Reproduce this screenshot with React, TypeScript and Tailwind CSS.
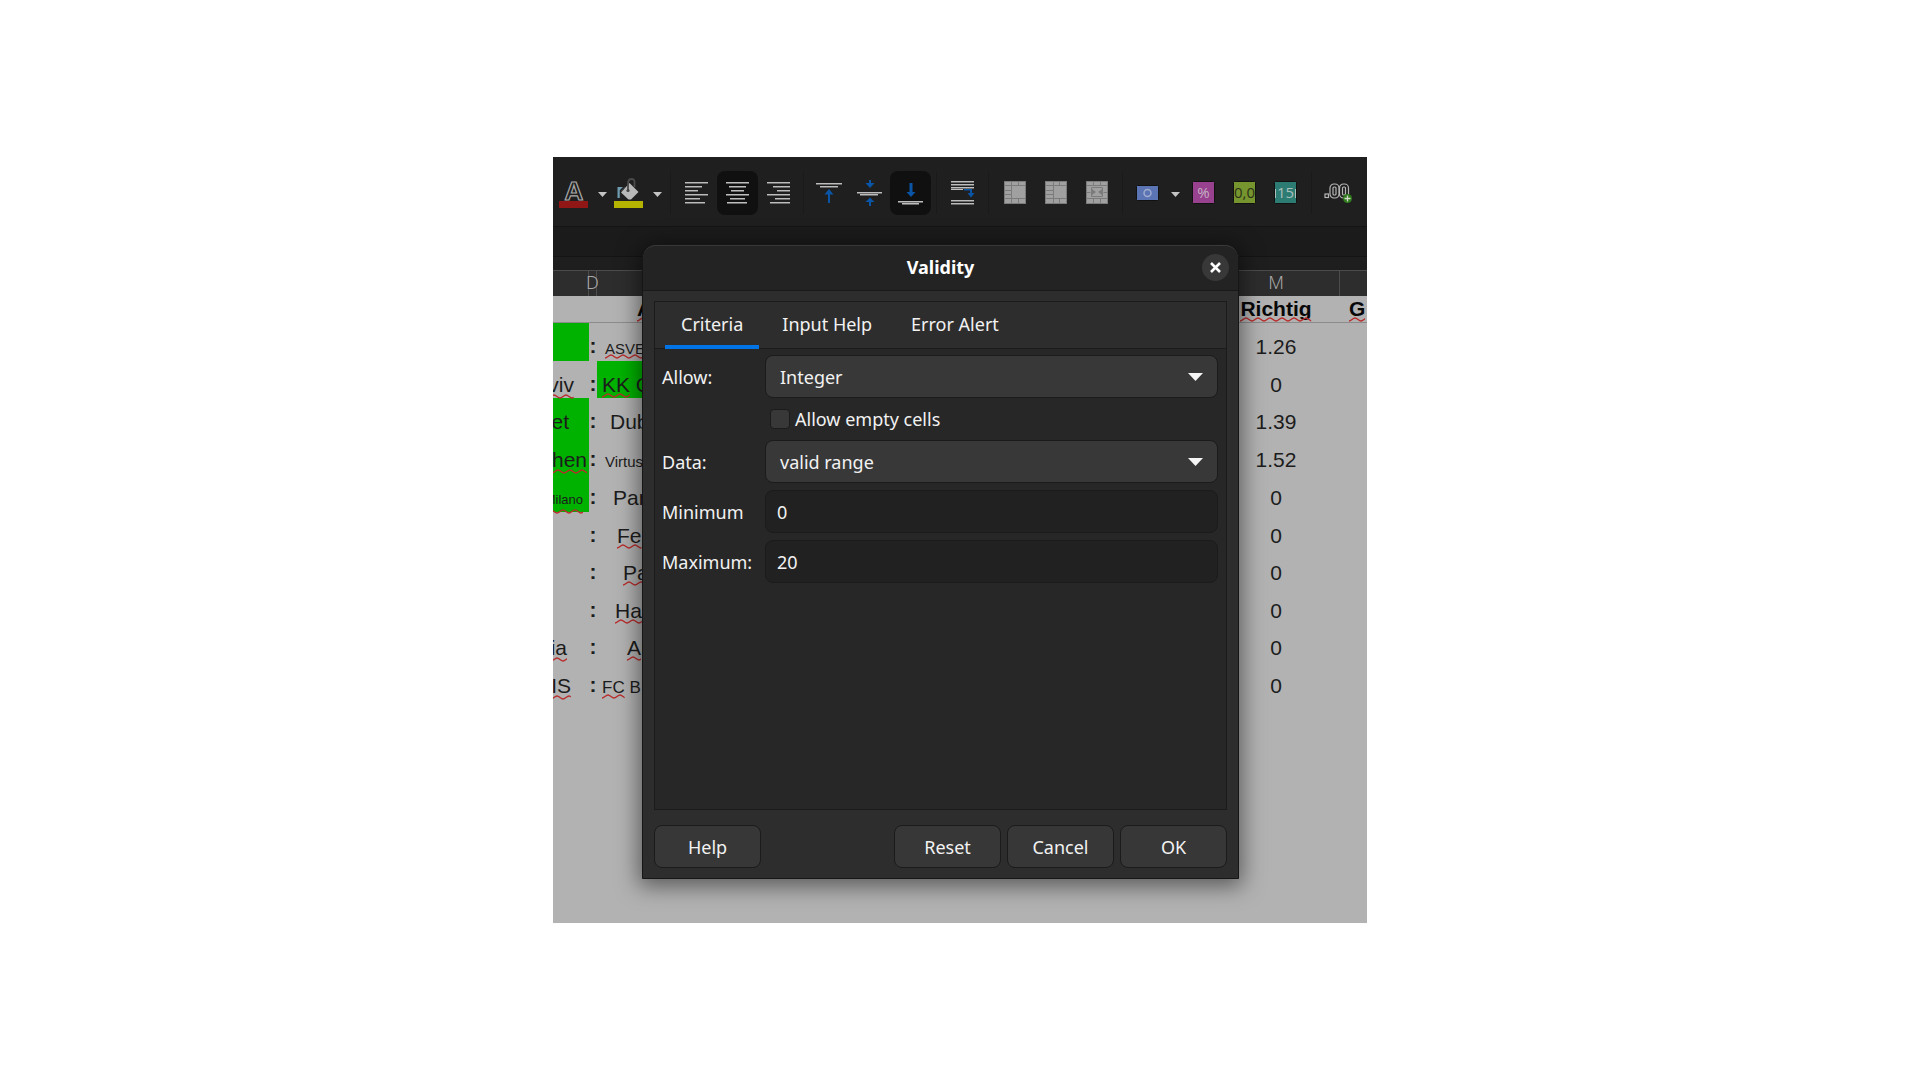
import React, { useState } from "react";

interface Row {
  home: string;
  homeStyle: string;
  homeGreen?: boolean;
  homeWavy?: boolean;
  away: string;
  awayRest?: string;
  awayStyle: string;
  awayGreen?: boolean;
  awayWavy?: boolean;
  score: string;
}

const ROWS: Row[] = [
  { home: "", homeStyle: "", homeGreen: true, away: "ASVE", awayStyle: "pl-2 text-[15px] pt-1", awayWavy: true, score: "1.26" },
  { home: "viv", homeStyle: "pr-[15px]", homeWavy: true, away: "KK", awayRest: " G", awayStyle: "pl-[5px]", awayGreen: true, awayWavy: true, score: "0" },
  { home: "et", homeStyle: "pr-5", homeGreen: true, away: "Dub", awayStyle: "pl-[13px]", score: "1.39" },
  { home: "hen", homeStyle: "pr-[2px]", homeGreen: true, homeWavy: true, away: "Virtus", awayStyle: "pl-2 text-[15px] pt-1", score: "1.52" },
  { home: "Milano", homeStyle: "pr-[6px] text-[13px] pt-1", homeGreen: true, homeWavy: true, away: "Par", awayStyle: "pl-4", score: "0" },
  { home: "", homeStyle: "", away: "Fe", awayStyle: "pl-5", awayWavy: true, score: "0" },
  { home: "", homeStyle: "", away: "Pa", awayStyle: "pl-[26px]", awayWavy: true, score: "0" },
  { home: "", homeStyle: "", away: "Ha", awayStyle: "pl-[18px]", awayWavy: true, score: "0" },
  { home: "ia", homeStyle: "pr-[22px]", homeWavy: true, away: "A", awayRest: "r", awayStyle: "pl-[30px]", awayWavy: true, score: "0" },
  { home: "IS", homeStyle: "pr-[18px]", homeWavy: true, away: "FC", awayRest: " B", awayStyle: "pl-[5px] text-[17px] pt-1", awayWavy: true, score: "0" },
];

const TABS = ["Criteria", "Input Help", "Error Alert"];

/* ---------- toolbar icons ---------- */

// a light line with a dimmer one right below it
function Line({ x, y, w }: { x: number; y: number; w: number }) {
  return (
    <>
      <rect x={x} y={y} width={w} height="1" fill="#bdbdbd" />
      <rect x={x} y={y + 1} width={w} height="1" fill="#6a6a6a" />
    </>
  );
}

const ALIGN_WIDTHS = [23, 17, 13, 23, 15, 20];

function AlignIcon({ side }: { side: "left" | "center" | "right" }) {
  return (
    <svg width="23" height="22" viewBox="0 0 23 22">
      {ALIGN_WIDTHS.map((w, i) => {
        const x = side === "left" ? 0 : side === "right" ? 23 - w : Math.floor((23 - w) / 2);
        return <Line key={i} x={x} y={i * 4} w={w} />;
      })}
    </svg>
  );
}

function FontColorIcon() {
  return (
    <svg width="30" height="30" viewBox="0 0 30 30">
      <text x="15" y="22" textAnchor="middle" fontFamily="Liberation Sans, sans-serif" fontWeight="bold" fontSize="26" fill="#1f1f1f" stroke="#a8a8a8" strokeWidth="1.2">A</text>
      <rect x="0" y="23" width="29" height="7" fill="#911616" />
    </svg>
  );
}

function FillColorIcon() {
  return (
    <svg width="30" height="30" viewBox="0 0 30 30">
      <path d="M3.500 20V9H11l-3.500 3.500L6 15v5z" fill="#6f9bb0" />
      <path d="M6.500 20v-7.500L12 7" fill="none" stroke="#222" strokeWidth="1.500" />
      <path d="M7 14.500L15.500 5 24.500 14l-7.500 7.500h-2.500z" fill="#b8b8b8" />
      <path d="M14 12V5.500Q14 1 17.500 1T20.500 5v4" fill="none" stroke="#4a4a4a" strokeWidth="1.800" />
      <circle cx="14" cy="12.500" r="1.600" fill="#444" />
      <rect x="0" y="23" width="29" height="7" fill="#b3b300" />
    </svg>
  );
}

function TopIcon() {
  return (
    <svg width="26" height="26" viewBox="0 0 26 26">
      <Line x={0} y={3} w={26} />
      <Line x={4} y={6} w={18} />
      <path d="M13 9l4.500 5.500H14V23h-2v-8.500H8.500z" fill="#0a55a5" />
    </svg>
  );
}

function MiddleIcon() {
  return (
    <svg width="26" height="26" viewBox="0 0 26 26">
      <path d="M12 0h2v3h3.500L13 8 8.500 3H12z" fill="#0a55a5" />
      <Line x={0} y={12} w={25} />
      <Line x={3} y={14} w={18} />
      <path d="M13 17.500l4.500 4.500H14v4h-2v-4H8.500z" fill="#0a55a5" />
    </svg>
  );
}

function BottomIcon() {
  return (
    <svg width="26" height="26" viewBox="0 0 26 26">
      <path d="M11.500 3h3v9h3L13 17l-4.500-5h3z" fill="#0a55a5" />
      <Line x={0} y={21} w={25} />
      <Line x={4} y={23} w={17} />
    </svg>
  );
}

function WrapIcon() {
  return (
    <svg width="24" height="24" viewBox="0 0 24 24">
      <Line x={0} y={0} w={23} />
      <Line x={0} y={3} w={23} />
      <Line x={0} y={6} w={23} />
      <rect x="0" y="8" width="12" height="1" fill="#bdbdbd" />
      <path d="M13 8h8v4h2.500L20 16.500 16.500 12H19v-2.500h-6z" fill="#0a55a5" />
      <Line x={0} y={19} w={23} />
      <Line x={0} y={22} w={23} />
    </svg>
  );
}

function MergeIcon({ kind }: { kind: "merge" | "mergeCenter" | "unmerge" }) {
  return (
    <svg width="22" height="23" viewBox="0 0 22 23">
      <rect width="22" height="23" rx="1" fill="#a0a0a0" />
      <g fill="none" stroke="#7b7b7b" strokeWidth="1">
        <path d="M0 4.500h22M0 17.500h22M.500 .500h21v22H.500z" />
        {kind === "merge" && <path d="M7.500 0v23M14.500 0v4.500M14.500 17.500V23M0 9.500h7.500M0 13.500h7.500" />}
        {kind === "mergeCenter" && <path d="M8.500 0v23M14.500 0v4.500M14.500 17.500V23M0 9.500h8.500M0 13.500h8.500" />}
        {kind === "unmerge" && (
          <>
            <path d="M7.500 0v4.500M14.500 0v4.500M7.500 17.500V23M14.500 17.500V23M0 11.500h4.500M17.500 11.500H22M5.500 6.500h11v9h-11z" />
            <path d="M6 8l4 3-4 3zM16 8l-4 3 4 3z" fill="#7b7b7b" stroke="none" />
          </>
        )}
      </g>
    </svg>
  );
}

function CurrencyIcon() {
  return (
    <svg width="23" height="16" viewBox="0 0 23 16">
      <rect x=".500" y=".500" width="22" height="15" rx="1" fill="#5b74b4" stroke="#111" />
      <circle cx="11.500" cy="8" r="3.500" fill="none" stroke="#9fabcf" strokeWidth="1.500" />
    </svg>
  );
}

function BoxIcon({ text, fill, color, ticks }: { text: string; fill: string; color: string; ticks?: boolean }) {
  return (
    <svg width="23" height="23" viewBox="0 0 23 23">
      <rect x=".500" y=".500" width="22" height="22" rx="1" fill={fill} stroke="#111" />
      {ticks && <path d="M1.500 8v9M21.500 8v9" stroke={color} />}
      <text x="11.500" y="17" textAnchor="middle" fontFamily="Open Sans, sans-serif" fontSize="15" fill={color}>{text}</text>
    </svg>
  );
}

function AddDecimalIcon() {
  return (
    <svg width="28" height="22" viewBox="0 0 28 22">
      <g fill="none" stroke="#b5b5b5" strokeWidth="1.200">
        <rect x="1" y="12" width="3.500" height="3.500" />
        <rect x="6" y="2" width="9" height="14" rx="4" />
        <rect x="15.500" y="2" width="9" height="14" rx="4" />
        <rect x="9" y="5" width="3" height="8" rx="1" />
        <rect x="18.500" y="5" width="3" height="8" rx="1" />
      </g>
      <circle cx="23.500" cy="16.500" r="4.500" fill="#2f7a1c" />
      <path d="M23.500 13.500v6M20.500 16.500h6" stroke="#cfd8c8" strokeWidth="1.300" />
    </svg>
  );
}

function Caret() {
  return (
    <svg width="9" height="5" viewBox="0 0 9 5">
      <path d="M0 0h9L4.500 5z" fill="#c4c4c4" />
    </svg>
  );
}

/* ---------- toolbar ---------- */

function ToolButton({ label, active, children }: { label: string; active?: boolean; children: React.ReactNode }) {
  return (
    <button
      type="button"
      aria-label={label}
      aria-pressed={active}
      className={`flex h-11 w-[41px] shrink-0 items-center justify-center rounded-lg ${active ? "bg-[#101010]" : ""}`}
    >
      {children}
    </button>
  );
}

function SplitButton({ label, children }: { label: string; children: React.ReactNode }) {
  return (
    <div className="flex shrink-0 items-center">
      <button type="button" aria-label={label} className="flex h-11 w-[38px] items-center justify-center">
        {children}
      </button>
      <button type="button" aria-label={`${label} options`} className="flex h-11 w-[17px] items-center justify-end pt-[3px] pr-[3px]">
        <Caret />
      </button>
    </div>
  );
}

function Separator({ tight }: { tight?: boolean }) {
  return <div className={`h-[42px] w-px shrink-0 bg-[#1a1a1a] ${tight ? "mx-1" : "mx-[5px]"}`} />;
}

function Toolbar() {
  return (
    <div className="flex h-[70px] items-center border-b border-[#141414] bg-[#1f1f1f] pt-[2px] pl-[2px]">
      <SplitButton label="Font color"><FontColorIcon /></SplitButton>
      <SplitButton label="Background color"><FillColorIcon /></SplitButton>
      <Separator />
      <ToolButton label="Align left"><AlignIcon side="left" /></ToolButton>
      <ToolButton label="Center horizontally" active><AlignIcon side="center" /></ToolButton>
      <ToolButton label="Align right"><AlignIcon side="right" /></ToolButton>
      <Separator tight />
      <ToolButton label="Align top"><TopIcon /></ToolButton>
      <ToolButton label="Center vertically"><MiddleIcon /></ToolButton>
      <ToolButton label="Align bottom" active><BottomIcon /></ToolButton>
      <Separator />
      <ToolButton label="Wrap text"><WrapIcon /></ToolButton>
      <Separator />
      <ToolButton label="Merge cells"><MergeIcon kind="merge" /></ToolButton>
      <ToolButton label="Merge and center"><MergeIcon kind="mergeCenter" /></ToolButton>
      <ToolButton label="Unmerge cells"><MergeIcon kind="unmerge" /></ToolButton>
      <Separator />
      <SplitButton label="Format as currency"><CurrencyIcon /></SplitButton>
      <ToolButton label="Format as percent"><BoxIcon text="%" fill="#98418f" color="#c4b0c1" /></ToolButton>
      <ToolButton label="Format as number"><BoxIcon text="0,0" fill="#76952f" color="#2c3317" /></ToolButton>
      <ToolButton label="Format as date"><BoxIcon text="15" fill="#2d7c73" color="#a9bfbc" ticks /></ToolButton>
      <Separator />
      <ToolButton label="Add decimal place"><AddDecimalIcon /></ToolButton>
    </div>
  );
}

/* ---------- sheet ---------- */

// word with the spell checker's red wave under it
function Misspelled({ id, children }: { id: string; children: React.ReactNode }) {
  return (
    <span className="relative">
      {children}
      <svg className="absolute -bottom-[2px] left-0 h-[5px] w-full" aria-hidden="true">
        <defs>
          <pattern id={id} width="12" height="5" patternUnits="userSpaceOnUse">
            <path d="M0 4C2 4 4 1 6 1S10 4 12 4" fill="none" stroke="#b92b2b" strokeWidth="1.500" />
          </pattern>
        </defs>
        <rect width="100%" height="5" fill={`url(#${id})`} />
      </svg>
    </span>
  );
}

function Sheet() {
  return (
    <div className="bg-[#b2b2b2] pb-[223px]">
      <table className="w-full table-fixed border-separate border-spacing-0 font-['Liberation_Sans',sans-serif] text-[21px] leading-6 text-[#1c1c1c]">
        <colgroup>
          <col className="w-9" />
          <col className="w-2" />
          <col />
          <col className="w-[127px]" />
          <col className="w-[27px]" />
        </colgroup>
        <thead>
          <tr className="h-[26px] bg-[#2d2d2d] font-['Noto_Sans',sans-serif] text-[18px] leading-5 text-[#a8a8a8]">
            <th className="border-t border-r border-[#4c4c4c] p-0" />
            <th className="border-t border-r border-[#4c4c4c] p-0 pb-1 font-light">
              <div className="flex justify-center">D</div>
            </th>
            <th className="border-t border-[#4c4c4c] p-0" />
            <th className="border-t border-r border-[#4c4c4c] p-0 pb-1 font-light">M</th>
            <th className="border-t border-[#4c4c4c] p-0" />
          </tr>
        </thead>
        <tbody>
          <tr className="h-[27px] font-bold text-[#080808]">
            <td className="border-b border-[#8c8c8c] p-0" />
            <td className="border-b border-[#8c8c8c] p-0" />
            <td className="border-b border-[#8c8c8c] p-0 pl-[40px]"><Misspelled id="wave-a">A</Misspelled></td>
            <td className="border-b border-[#8c8c8c] p-0 pr-px text-center"><Misspelled id="wave-m">Richtig</Misspelled></td>
            <td className="border-b border-[#8c8c8c] p-0 pl-[9px]"><Misspelled id="wave-n">G</Misspelled></td>
          </tr>
          {ROWS.map((row, i) => (
            <tr key={i} className="h-[38px] odd:h-[37px]">
              <td className={`p-0 pt-[10px] ${row.homeGreen ? "bg-[#00b200]" : ""}`}>
                <div className={`flex justify-end ${row.homeStyle}`}>
                  {row.homeWavy ? <Misspelled id={`wave-home-${i}`}>{row.home}</Misspelled> : row.home}
                </div>
              </td>
              <td className="p-0 pt-2 font-bold">
                <div className="flex justify-center">:</div>
              </td>
              <td className={`p-0 pt-[10px] ${row.awayGreen ? "bg-[#00b200]" : ""}`}>
                <div className={`whitespace-nowrap ${row.awayStyle}`}>
                  {row.awayWavy ? <Misspelled id={`wave-away-${i}`}>{row.away}</Misspelled> : row.away}
                  {row.awayRest}
                </div>
              </td>
              <td className="p-0 pt-[10px] pr-px text-center">{row.score}</td>
              <td className="p-0" />
            </tr>
          ))}
        </tbody>
      </table>
    </div>
  );
}

/* ---------- dialog ---------- */

function SelectField({ id, options }: { id: string; options: string[] }) {
  return (
    <div className="relative">
      <select id={id} className="h-[43px] w-full appearance-none rounded-lg border border-[#1b1b1b] bg-[#383838] pl-[14px] outline-none">
        {options.map((o) => (
          <option key={o}>{o}</option>
        ))}
      </select>
      <svg className="pointer-events-none absolute top-[18px] right-[15px]" width="15" height="8" viewBox="0 0 15 8">
        <path d="M0 0h15L7.500 8z" fill="#f5f5f5" />
      </svg>
    </div>
  );
}

function NumberField({ id, value }: { id: string; value: string }) {
  return (
    <input
      id={id}
      type="text"
      defaultValue={value}
      className="mt-[7px] h-[43px] w-full rounded-lg border border-[#1b1b1b] bg-[#212121] pl-[11px] outline-none"
    />
  );
}

function DialogButton({ children }: { children: React.ReactNode }) {
  return (
    <button type="button" className="h-[43px] w-[107px] rounded-lg border border-[#1b1b1b] bg-[#373737]">
      {children}
    </button>
  );
}

function ValidityDialog() {
  const [tab, setTab] = useState("Criteria");
  return (
    <div
      role="dialog"
      aria-label="Validity"
      className="absolute top-[87px] right-[128px] left-[89px] rounded-t-[14px] border border-[#161616] bg-[#2d2d2d] font-['Noto_Sans',sans-serif] text-[18px] leading-6 text-[#f2f2f2] shadow-[0_4px_22px_3px_rgba(0,0,0,0.5)]"
    >
      <div className="grid h-[46px] grid-cols-[1fr_auto_1fr] items-center rounded-t-[13px] border-t border-b border-t-[#383838] border-b-[#191919] bg-[#232323] px-[9px] pb-[2px]">
        <h1 className="col-start-2 font-bold text-white">Validity</h1>
        <button type="button" aria-label="Close" className="flex size-[27px] items-center justify-center justify-self-end rounded-full bg-[#383838]">
          <svg width="11" height="11" viewBox="0 0 11 11">
            <path d="M1 1l9 9M10 1l-9 9" stroke="#fff" strokeWidth="2.600" />
          </svg>
        </button>
      </div>

      <div className="px-[11px] pt-[10px] pb-[10px]">
        <div className="border border-[#1b1b1b] bg-[#272727]">
          <div role="tablist" className="flex h-[47px] gap-[7px] border-b border-[#1b1b1b] bg-[#2d2d2d] pl-[10px]">
            {TABS.map((t) => (
              <button
                key={t}
                type="button"
                role="tab"
                aria-selected={tab === t}
                onClick={() => setTab(t)}
                className={`-mb-px border-b-4 px-4 pt-px ${tab === t ? "border-[#0073e5]" : "border-transparent"}`}
              >
                {t}
              </button>
            ))}
          </div>

          <div className="grid grid-cols-[103px_1fr] items-center pt-[6px] pr-2 pb-[226px] pl-[7px]">
            <label htmlFor="allow">Allow:</label>
            <SelectField id="allow" options={["Integer", "Decimal", "Date", "Time", "List"]} />
            <label className="col-start-2 flex h-[42px] items-center gap-[5px] pl-[5px]">
              <input type="checkbox" className="size-5 appearance-none rounded border border-[#1b1b1b] bg-[#383838] checked:bg-[#0073e5]" />
              Allow empty cells
            </label>
            <label htmlFor="data">Data:</label>
            <SelectField id="data" options={["valid range", "invalid range", "equal", "less than"]} />
            <label htmlFor="min" className="pt-[7px]">Minimum</label>
            <NumberField id="min" value="0" />
            <label htmlFor="max" className="pt-[7px]">Maximum:</label>
            <NumberField id="max" value="20" />
          </div>
        </div>

        <div className="flex gap-[6px] pt-[15px]">
          <DialogButton>Help</DialogButton>
          <div className="flex-1" />
          <DialogButton>Reset</DialogButton>
          <DialogButton>Cancel</DialogButton>
          <DialogButton>OK</DialogButton>
        </div>
      </div>
    </div>
  );
}

export default function App() {
  return (
    <div className="flex min-h-screen items-center justify-center bg-white">
      <main className="relative w-full max-w-[814px] overflow-hidden">
        <Toolbar />
        <div className="h-[30px] border-b border-[#141414] bg-[#1b1b1b]" />
        <div className="h-[13px] bg-[#1e1e1e]" />
        <Sheet />
        <ValidityDialog />
      </main>
    </div>
  );
}
